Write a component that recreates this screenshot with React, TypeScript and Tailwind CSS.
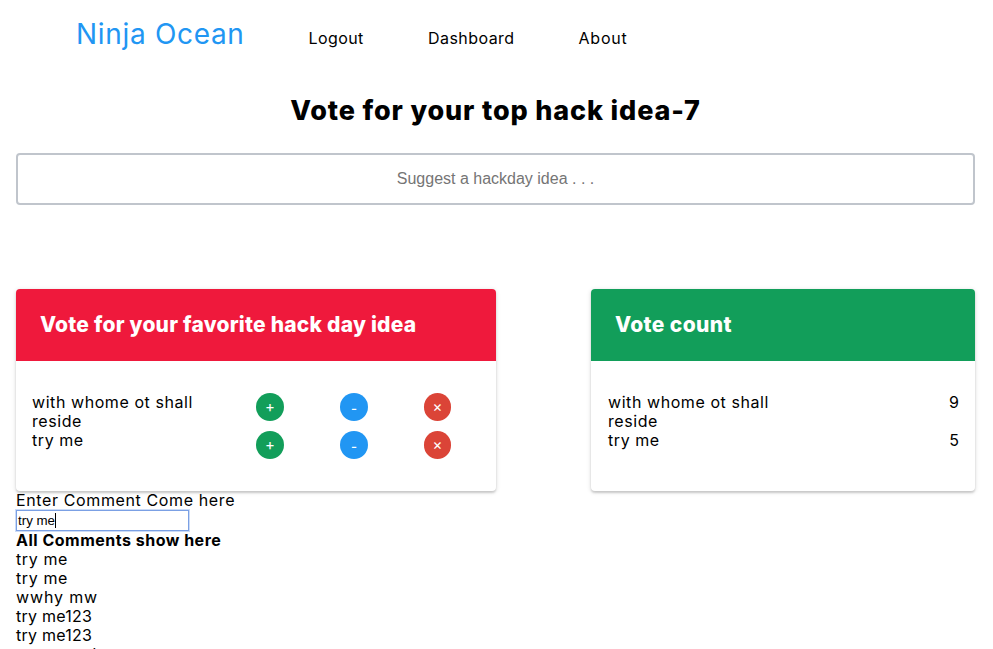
const ideas = [
  { name: "with whome ot shall reside", votes: 9 },
  { name: "try me", votes: 5 },
];

const comments = [
  { text: "try me", tracking: "tracking-[0.6px]" },
  { text: "try me", tracking: "tracking-[0.6px]" },
  { text: "wwhy mw", tracking: "tracking-[0.85px]" },
  { text: "try me123", tracking: "tracking-[0.25px]" },
  { text: "try me123", tracking: "tracking-[0.25px]" },
  { text: "we are end", tracking: "tracking-[-0.4px]" },
];

const cardShape =
  "overflow-hidden rounded shadow-[0_2px_2px_0_rgba(0,0,0,0.14),0_1px_5px_0_rgba(0,0,0,0.14)]";

const roundButton =
  "flex h-7 items-center justify-center rounded-full text-white leading-none";

function VoteCard() {
  return (
    <section className={`w-[480px] ${cardShape}`}>
      <h2 className="flex h-[72px] items-center bg-[#ef193c] pb-0.5 pl-6 text-[21px] font-extrabold tracking-[0.23px] text-white">
        <span className="whitespace-nowrap">Vote for your favorite hack day idea</span>
      </h2>
      <div className="h-[130px] px-4 pt-8">
        {ideas.map((idea) => (
          <div key={idea.name} className="flex h-[38px] items-start">
            <p className="w-[224px] pr-10 tracking-[0.57px]">{idea.name}</p>
            <div className="w-[84px]">
              <button className={`${roundButton} w-7 bg-[#129e5a] pb-0.5 text-[15px]`}>+</button>
            </div>
            <div className="w-[84px]">
              <button className={`${roundButton} w-7 bg-[#2196f3] pt-0.5 text-[13px] font-medium`}>-</button>
            </div>
            <button className={`${roundButton} w-[27px] bg-[#db4437] pb-0.5 text-[15px]`}>×</button>
          </div>
        ))}
      </div>
    </section>
  );
}

function CountCard() {
  return (
    <section className={`w-[384px] ${cardShape}`}>
      <h2 className="flex h-[72px] items-center bg-[#129e5a] pb-0.5 pl-6 text-[21px] font-extrabold tracking-[0.4px] text-white">
        <span>Vote count</span>
      </h2>
      <div className="h-[130px] pl-[17px] pr-4 pt-8">
        {ideas.map((idea) => (
          <div key={idea.name} className="flex h-[38px] items-start justify-between">
            <p className="w-[184px] tracking-[0.57px]">{idea.name}</p>
            <span>{idea.votes}</span>
          </div>
        ))}
      </div>
    </section>
  );
}

export default function App() {
  return (
    <main className="h-[649px] overflow-hidden bg-white pl-4 pr-[18px] font-[Inter,sans-serif] text-[16px] leading-[19px] text-black">
      <nav className="flex h-[83px] items-baseline pl-[60px] pt-[17px]">
        <a className="w-[232.5px] text-[28px] leading-[34px] tracking-[0.68px] text-[#2196f3]">Ninja Ocean</a>
        <a className="w-[119.5px] tracking-[0.4px]">Logout</a>
        <a className="w-[150.5px] tracking-[0.45px]">Dashboard</a>
        <a className="tracking-[0.8px]">About</a>
      </nav>
      <h1 className="flex h-[70px] justify-center pt-[11px] text-[27px] font-extrabold leading-[34px] tracking-[0.85px]">
        <span>Vote for your top hack idea-7</span>
      </h1>
      <input
        className="block h-[52px] w-full rounded border-2 border-[#c0c5cc] text-center font-['Liberation_Sans',Arial,sans-serif] text-[16px] outline-none placeholder:text-[#757575]"
        placeholder="Suggest a hackday idea . . ."
      />
      <div className="mt-[84px] flex justify-between">
        <VoteCard />
        <CountCard />
      </div>
      <label className="block tracking-[0.62px]">Enter Comment Come here</label>
      <div className="flex h-[21px] w-[173px] items-center border border-[#7ba0e4] pl-px font-['Liberation_Sans',Arial,sans-serif] text-[13.33px] shadow-[0_0_0_1px_rgba(140,175,235,0.45)]">
        <span>try me</span>
        <span className="h-[15px] w-px bg-black" />
      </div>
      <h3 className="font-bold tracking-[0.5px]">All Comments show here</h3>
      {comments.map((comment, i) => (
        <p key={i} className={comment.tracking}>
          {comment.text}
        </p>
      ))}
    </main>
  );
}
